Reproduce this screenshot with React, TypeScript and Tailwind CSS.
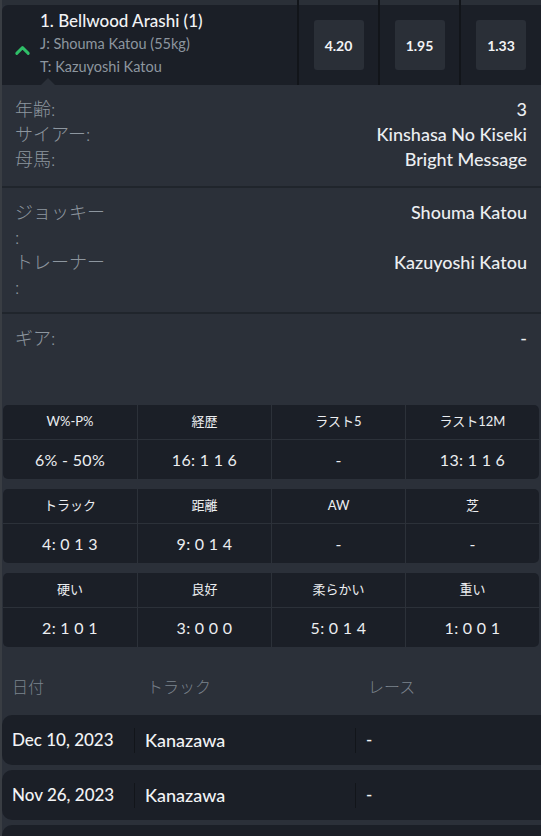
import { ChevronUp } from 'lucide-react';

const odds = ['4.20', '1.95', '1.33'];

const statTables: [string, string][][] = [
  [
    ['W%-P%', '6% - 50%'],
    ['経歴', '16: 1 1 6'],
    ['ラスト5', '-'],
    ['ラスト12M', '13: 1 1 6'],
  ],
  [
    ['トラック', '4: 0 1 3'],
    ['距離', '9: 0 1 4'],
    ['AW', '-'],
    ['芝', '-'],
  ],
  [
    ['硬い', '2: 1 0 1'],
    ['良好', '3: 0 0 0'],
    ['柔らかい', '5: 0 1 4'],
    ['重い', '1: 0 0 1'],
  ],
];

const history = [
  { date: 'Dec 10, 2023', track: 'Kanazawa', race: '-' },
  { date: 'Nov 26, 2023', track: 'Kanazawa', race: '-' },
];

function Divider() {
  return <div className="h-[2px] bg-[#20252c]" />;
}

function InfoRow({ label, value }: { label: string; value: string }) {
  return (
    <div className="flex justify-between leading-[25px]">
      <span className="text-[#8d969f] font-light">{label}</span>
      <span className="text-[#eceef1] font-medium">{value}</span>
    </div>
  );
}

function StatTable({ cells }: { cells: [string, string][] }) {
  return (
    <div className="ml-px mr-[2px] grid grid-cols-4 rounded-[5px] bg-[#1b1f27] overflow-hidden">
      {cells.map(([head], i) => (
        <div
          key={'h' + i}
          className={`h-[35px] flex items-center justify-center text-[13px] text-[#eceef1] border-b border-[#2c3139] ${i > 0 ? 'border-l' : ''}`}
        >
          {head}
        </div>
      ))}
      {cells.map(([, val], i) => (
        <div
          key={'v' + i}
          className={`h-[39px] flex items-center justify-center text-[16px] tracking-[0.3px] text-[#eceef1] border-[#2c3139] ${i > 0 ? 'border-l' : ''}`}
        >
          {val}
        </div>
      ))}
    </div>
  );
}

export default function App() {
  return (
    <div className="h-[836px] w-[541px] overflow-hidden bg-[#2b3039] border-l-2 border-[#393d43] font-['Lato','Noto_Sans_CJK_JP',sans-serif]">
      {/* runner header */}
      <div className="flex h-[85px]">
        <div className="flex-1 flex flex-col">
          <div className="h-[5px] bg-[#2a2f37]" />
          <div className="relative flex-1 flex items-center bg-[#1b1f27] rounded-tl-md">
            <ChevronUp className="ml-[9px] mt-[10px] text-[#2fbf68]" size={23} strokeWidth={3} />
            <div className="ml-[6px] -mt-[3px]">
              <div className="text-[17px] leading-[23px] font-medium text-[#f2f3f5]">1. Bellwood Arashi (1)</div>
              <div className="text-[14.5px] leading-[23px] text-[#8d969f]">J: Shouma Katou (55kg)</div>
              <div className="text-[14.5px] leading-[23px] text-[#8d969f]">T: Kazuyoshi Katou</div>
            </div>
            <div className="absolute left-[39px] bottom-0 w-0 h-0 border-l-[7px] border-r-[7px] border-b-[7px] border-l-transparent border-r-transparent border-b-[#2b3039]" />
          </div>
        </div>
        {odds.map((o, i) => (
          <div key={o} className="flex">
            <div className="w-[2px] bg-[#12151a]" />
            <div className={`${i === 2 ? 'w-[80px]' : 'w-[79px]'} flex flex-col`}>
              <div className="h-[5px] bg-[#2a2f37]" />
              <div className="flex-1 flex items-center justify-center bg-[#1b1f27]">
                <div className="w-[50px] h-[50px] rounded-[3px] bg-[#2a2f37] flex items-center justify-center text-[14px] font-bold text-[#f2f3f5]">
                  {o}
                </div>
              </div>
            </div>
          </div>
        ))}
      </div>

      {/* details */}
      <div className="pl-[13px] pr-[14px] pt-3 pb-[14px] text-[18px]">
        <InfoRow label="年齢:" value="3" />
        <InfoRow label="サイアー:" value="Kinshasa No Kiseki" />
        <InfoRow label="母馬:" value="Bright Message" />
      </div>
      <Divider />
      <div className="pl-[13px] pr-[14px] py-3 text-[18px] leading-[25px]">
        <div className="flex justify-between">
          <div className="text-[#8d969f] font-light">
            <div>ジョッキー</div>
            <div>:</div>
          </div>
          <span className="text-[#eceef1] font-medium">Shouma Katou</span>
        </div>
        <div className="flex justify-between">
          <div className="text-[#8d969f] font-light">
            <div>トレーナー</div>
            <div>:</div>
          </div>
          <span className="text-[#eceef1] font-medium">Kazuyoshi Katou</span>
        </div>
      </div>
      <Divider />
      <div className="h-[91px] pl-[13px] pr-[14px] pt-3 text-[18px]">
        <InfoRow label="ギア:" value="-" />
      </div>

      {/* stats */}
      <div className="flex flex-col gap-[10px]">
        {statTables.map((t, i) => (
          <StatTable key={i} cells={t} />
        ))}
      </div>

      {/* history */}
      <div className="flex pt-[28px] pb-[16px] text-[16px] leading-[24px] text-[#7b838d] font-light">
        <div className="w-[132px] pl-[10px]">日付</div>
        <div className="w-[222px] pl-[13px]">トラック</div>
        <div className="pl-[12px]">レース</div>
      </div>
      <div className="flex flex-col gap-[5px]">
        {history.map((h) => (
          <div key={h.date} className="w-[580px] h-[50px] flex items-center rounded-l-[10px] bg-[#1b1f27] text-[17px] font-medium text-[#f2f3f5]">
            <div className="w-[132px] pl-[10px]">{h.date}</div>
            <div className="w-px h-[25px] bg-[#12151a]" />
            <div className="w-[220px] pl-[10px] text-[18px]">{h.track}</div>
            <div className="w-px h-[25px] bg-[#12151a]" />
            <div className="pl-[10px]">{h.race}</div>
          </div>
        ))}
        <div className="w-[580px] h-[50px] rounded-l-[10px] bg-[#1b1f27]" />
      </div>
    </div>
  );
}
